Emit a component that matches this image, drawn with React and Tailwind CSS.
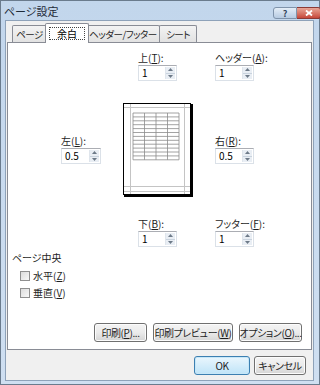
import React from "react";

const font = "font-['Noto_Sans_CJK_JP','Noto_Sans',sans-serif] [font-feature-settings:'palt']";

const Key = ({ k }) => (
  <>
    (<span className="underline">{k}</span>)
  </>
);

const Spinner = () => (
  <div className="flex flex-col w-[10px] h-full border-l border-[#dfe5ec]">
    <div className="flex-1 flex items-center justify-center bg-[#e9eef4] border-b border-[#c9d3de]">
      <svg width="5" height="3" viewBox="0 0 5 3">
        <path d="M0 3 L2.5 0 L5 3 Z" fill="#6d7a88" />
      </svg>
    </div>
    <div className="flex-1 flex items-center justify-center bg-[#e9eef4]">
      <svg width="5" height="3" viewBox="0 0 5 3">
        <path d="M0 0 L2.5 3 L5 0 Z" fill="#6d7a88" />
      </svg>
    </div>
  </div>
);

const Field = ({ label, k, value, w = "w-[39px]", className = "" }) => (
  <div className={`flex flex-col ${className}`}>
    <div className="h-[13px] leading-[13px] text-[10px] text-[#1e1e1e] whitespace-nowrap">
      {label}
      <Key k={k} />:
    </div>
    <div
      className={`mt-[1px] h-[16px] ${w} flex bg-white border border-[#dbe1e8] border-t-[#abadb3] p-[1px]`}
    >
      <div className="flex-1 pl-[2px] text-[10px] leading-[12px] text-black">{value}</div>
      <Spinner />
    </div>
  </div>
);

const PagePreview = () => {
  const cols = [10, 21.5, 33, 44.5, 56];
  const rows = Array.from({ length: 13 }, (_, i) => 10 + i * 3.9);
  return (
    <svg width="70" height="94" viewBox="0 0 70 94" className="block">
      <rect x="0.5" y="0.5" width="67" height="91" fill="#fff" stroke="#000" />
      <line x1="69" y1="1" x2="69" y2="94" stroke="#000" strokeWidth="2" />
      <line x1="1" y1="93" x2="70" y2="93" stroke="#000" strokeWidth="2" />
      <g stroke="#c4c4c4" strokeWidth="1">
        <line x1="7.5" y1="1" x2="7.5" y2="91" />
        <line x1="61.5" y1="1" x2="61.5" y2="91" />
        <line x1="1" y1="4.5" x2="67" y2="4.5" />
        <line x1="1" y1="83.5" x2="67" y2="83.5" />
        <line x1="1" y1="88.5" x2="67" y2="88.5" />
      </g>
      <g stroke="#8c8c8c" strokeWidth="0.8">
        {cols.map((x) => (
          <line key={x} x1={x} y1="10" x2={x} y2="56.8" />
        ))}
        {rows.map((y) => (
          <line key={y} x1="10" y1={y} x2="56" y2={y} />
        ))}
      </g>
    </svg>
  );
};

const Button = ({ children, w, primary }) => (
  <button
    className={`${w} h-[19px] rounded-[3px] border text-[10px] leading-[17px] text-[#1e1e1e] whitespace-nowrap px-0 tracking-[-0.4px] flex items-center justify-center ${
      primary
        ? "border-[#3c7fb1] bg-gradient-to-b from-[#eaf6fd] to-[#bfe4f8] shadow-[inset_0_0_0_1px_#c6e7f8]"
        : "border-[#707070] bg-gradient-to-b from-[#f4f4f4] via-[#ebebeb] to-[#d5d5d5] shadow-[inset_0_0_0_1px_#fcfcfc]"
    }`}
  >
    <span>{children}</span>
  </button>
);

const Tab = ({ children, active, w }) =>
  active ? (
    <div
      className={`${w} relative z-10 -mx-[2px] -mb-[1px] h-[20px] px-[3px] pt-[3px] bg-white border border-b-0 border-[#898c95] rounded-t-[2px]`}
    >
      <div className="h-[13px] leading-[11px] text-[10px] text-center border border-dotted border-[#444]">
        {children}
      </div>
    </div>
  ) : (
    <div
      className={`${w} h-[17px] leading-[16px] text-[9.5px] text-center whitespace-nowrap tracking-[-0.5px] text-[#1e1e1e] bg-gradient-to-b from-[#f3f3f3] to-[#e2e2e2] border border-b-0 border-[#898c95] rounded-t-[2px] -ml-[1px] first:ml-0`}
    >
      {children}
    </div>
  );

const Checkbox = ({ label, k }) => (
  <div className="h-[17px] flex items-center gap-[3px]">
    <div className="w-[10px] h-[10px] border border-[#8f8f8f] bg-gradient-to-br from-[#dcdcdc] to-[#f8f8f8]" />
    <span className="text-[10px] leading-[13px] text-[#1e1e1e]">
      {label}
      <Key k={k} />
    </span>
  </div>
);

export default function App() {
  return (
    <div
      className={`w-[320px] h-[385px] flex flex-col border border-[#6a7b8d] bg-gradient-to-b from-[#c2d6ec] to-[#cfdff1] ${font}`}
    >
      {/* title bar */}
      <div className="h-[19px] flex items-start justify-between">
        <div className="pl-[3px] pt-[4px] text-[11px] leading-[13px] text-[#1e2a38]">ページ設定</div>
        <div className="flex pt-[6px] -mr-[2px]">
          <div className="w-[24px] h-[12px] rounded-l-[3px] border border-[#7f93ab] bg-gradient-to-b from-[#e4edf7] to-[#b7cbe2] flex items-center justify-center">
            <span className="text-[9px] leading-[9px] font-bold text-[#33475e]">?</span>
          </div>
          <div className="w-[24px] h-[12px] rounded-r-[3px] border border-l-0 border-[#8b3a36] bg-gradient-to-b from-[#e7a597] to-[#c6473a] flex items-center justify-center">
            <svg width="8" height="6" viewBox="0 0 8 6">
              <path d="M1 0.5 L7 5.5 M7 0.5 L1 5.5" stroke="#fff" strokeWidth="1.8" />
            </svg>
          </div>
        </div>
      </div>

      {/* client area */}
      <div className="flex-1 ml-[4px] mr-[5px] border border-[#8ea2b9] bg-[#f0f0f0] flex flex-col">
        <div className="flex items-end pt-[2px] pl-[5px] ml-[1px]">
          <Tab w="w-[35px]">ページ</Tab>
          <Tab active w="w-[44px]">余白</Tab>
          <Tab w="w-[74px]">ヘッダー/フッター</Tab>
          <Tab w="w-[38px]">シート</Tab>
        </div>

        <div className="mx-[1px] h-[308px] bg-white border border-[#898c95] flex flex-col">
          <div className="flex pt-[8px] pl-[130px]">
            <Field label="上" k="T" value="1" className="w-[77px]" />
            <Field label="ヘッダー" k="A" value="1" />
          </div>

          <div className="flex items-start mt-[22px] pl-[53px]">
            <Field label="左" k="L" value="0.5" w="w-[40px]" className="mt-[31px] w-[62px]" />
            <PagePreview />
            <Field label="右" k="R" value="0.5" className="mt-[31px] ml-[22px]" />
          </div>

          <div className="flex mt-[20px] pl-[130px]">
            <Field label="下" k="B" value="1" className="w-[77px]" />
            <Field label="フッター" k="F" value="1" />
          </div>

          <div className="mt-[4px] flex items-center pl-[4px] pr-[6px] gap-[4px]">
            <span className="text-[10px] leading-[13px] text-[#1e1e1e]">ページ中央</span>
          </div>
          <div className="mt-[3px] pl-[12px] flex flex-col">
            <Checkbox label="水平" k="Z" />
            <Checkbox label="垂直" k="V" />
          </div>

          <div className="mt-auto pb-[7px] pr-[9px] flex justify-end gap-[6px]">
            <Button w="w-[53px]">
              印刷<Key k="P" />...
            </Button>
            <Button w="w-[80px]">
              印刷プレビュー<Key k="W" />
            </Button>
            <Button w="w-[63px]">
              オプション<Key k="O" />...
            </Button>
          </div>
        </div>

        <div className="mt-[6px] pr-[7px] flex justify-end gap-[4px]">
          <Button w="w-[56px]" primary>
            OK
          </Button>
          <Button w="w-[52px]">キャンセル</Button>
        </div>
      </div>
      <div className="h-[3px]" />
    </div>
  );
}
